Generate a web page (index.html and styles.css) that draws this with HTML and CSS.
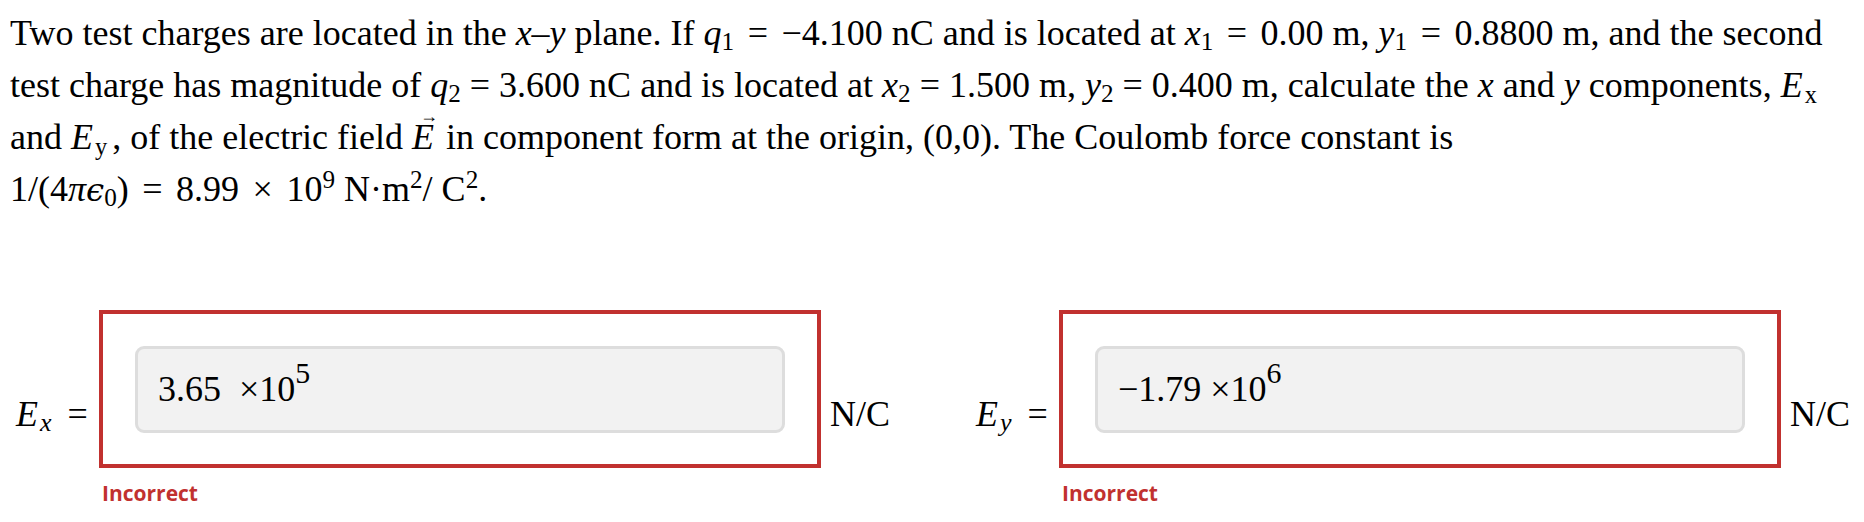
FILE: index.html
```html
<!DOCTYPE html>
<html lang="en">
<head>
<meta charset="utf-8">
<title>Electric field components</title>
<link rel="stylesheet" href="styles.css">
</head>
<body>
<main class="page">
  <p class="question">Two test charges are located in the <span class="mi">x</span>–<span class="mi">y</span> plane. If <span class="mi">q</span><sub>1</sub> <span class="op">=</span> −4.100 nC and is located at <span class="mi">x</span><sub>1</sub> <span class="op">=</span> 0.00 m, <span class="mi">y</span><sub>1</sub> <span class="op">=</span> 0.8800 m, and the second<br>test charge has magnitude of <span class="mi">q</span><sub>2</sub> = 3.600 nC and is located at <span class="mi">x</span><sub>2</sub> = 1.500 m, <span class="mi">y</span><sub>2</sub> = 0.400 m, calculate the <span class="mi">x</span> and <span class="mi">y</span> components, <span class="mi">E</span><sub class="rsub">x</sub><br>and <span class="mi">E</span><sub class="rsub">y</sub>, of the electric field <span class="vec"><span class="mi">E</span></span> in component form at the origin, (0,0). The Coulomb force constant is<br>1/(4<span class="mi">π</span><span class="mi eps">ϵ</span><sub>0</sub>) <span class="op">=</span> 8.99 <span class="op">×</span> 10<sup>9</sup> N·m<sup>2</sup>/ C<sup>2</sup>.</p>

  <div class="answers">
    <div class="answer">
      <div class="field">
        <span class="label"><span class="mi">E</span><sub class="lsub">x</sub><span class="eq">=</span></span>
        <div class="box"><div class="input">3.65  ×10<sup class="isup">5</sup></div></div>
        <span class="unit">N/C</span>
      </div>
      <div class="feedback">Incorrect</div>
    </div>
    <div class="answer">
      <div class="field">
        <span class="label"><span class="mi">E</span><sub class="lsub">y</sub><span class="eq">=</span></span>
        <div class="box"><div class="input">−1.79 ×10<sup class="isup">6</sup></div></div>
        <span class="unit">N/C</span>
      </div>
      <div class="feedback">Incorrect</div>
    </div>
  </div>
</main>
</body>
</html>
```
FILE: styles.css
```css
html, body {
  margin: 0;
  padding: 0;
  background: #ffffff;
}

.page {
  color: #000000;
  font-family: "Liberation Serif", "Times New Roman", "DejaVu Serif", serif;
  font-size: 36px;
}

.question {
  margin: 0;
  padding: 7px 10px 0;
  line-height: 52px;
  white-space: nowrap;
}

.mi {
  font-style: italic;
}

.op {
  margin: 0 4.5px;
}

.eps {
  font-family: "DejaVu Serif", serif;
  font-size: 0.9em;
}

sub, sup {
  line-height: 0;
  font-size: 0.7em;
}

sub {
  vertical-align: -0.2em;
}

sup {
  vertical-align: 0.5em;
}

.rsub {
  font-size: 0.68em;
  vertical-align: -0.25em;
  margin-left: 2px;
  margin-right: 5px;
}

.vec {
  position: relative;
  display: inline-block;
  margin-right: 3px;
}

.vec::before {
  content: "→";
  position: absolute;
  left: 8px;
  top: -4px;
  font-size: 18px;
  font-style: normal;
  line-height: 1;
}

.answers {
  display: grid;
  grid-template-columns: 960px 900px;
  padding-left: 16px;
  margin-top: 94px;
}

.field {
  display: flex;
  align-items: flex-start;
}

.label {
  width: 83px;
  margin-top: 84px;
  line-height: 40px;
  white-space: nowrap;
}

.lsub {
  font-style: italic;
  font-size: 0.72em;
  vertical-align: -0.18em;
  margin-left: 2px;
}

.eq {
  margin-left: 16px;
}

.box {
  width: 722px;
  box-sizing: border-box;
  border: 4px solid #c1312f;
  padding: 32px 32px 31px;
}

.input {
  box-sizing: border-box;
  height: 87px;
  border: 3px solid #dddddd;
  border-radius: 9px;
  background: #f2f2f2;
  padding: 20px 20px 0;
  line-height: 40px;
  white-space: pre;
}

.isup {
  font-size: 0.83em;
  vertical-align: 18px;
}

.unit {
  margin-left: 9px;
  margin-top: 84px;
  line-height: 40px;
}

.feedback {
  margin: 11px 0 0 86px;
  font-family: "Open Sans", "Noto Sans", sans-serif;
  font-weight: 700;
  font-size: 21px;
  line-height: 28px;
  color: #c1312f;
}
```
